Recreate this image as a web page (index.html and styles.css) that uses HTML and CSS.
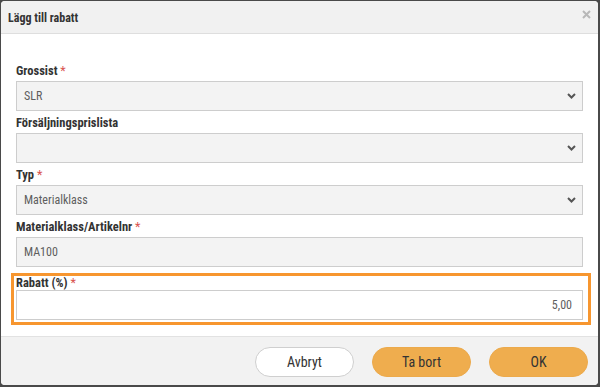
FILE: index.html
```html
<!DOCTYPE html>
<html lang="sv">
<head>
  <meta charset="UTF-8" />
  <title>Lägg till rabatt</title>
  <link rel="stylesheet" href="styles.css">
</head>
<body>
  <div class="modal">
    <div class="modal-header">
      <span class="modal-title">Lägg till rabatt</span>
      <svg class="close" width="9" height="9" viewBox="0 0 9 9">
        <path d="M1 1 L8 8 M8 1 L1 8" stroke="#b8b8b8" stroke-width="2" />
      </svg>
    </div>

    <div class="modal-body">
      <div class="form-group">
        <label>Grossist <span class="req">*</span></label>
        <div class="field select">
          <span>SLR</span>
          <svg width="9" height="6" viewBox="0 0 9 6"><path d="M1 1 L4.5 4.5 L8 1" fill="none" stroke="#555" stroke-width="2" /></svg>
        </div>
      </div>

      <div class="form-group">
        <label>Försäljningsprislista</label>
        <div class="field select">
          <span></span>
          <svg width="9" height="6" viewBox="0 0 9 6"><path d="M1 1 L4.5 4.5 L8 1" fill="none" stroke="#555" stroke-width="2" /></svg>
        </div>
      </div>

      <div class="form-group">
        <label>Typ <span class="req">*</span></label>
        <div class="field select">
          <span>Materialklass</span>
          <svg width="9" height="6" viewBox="0 0 9 6"><path d="M1 1 L4.5 4.5 L8 1" fill="none" stroke="#555" stroke-width="2" /></svg>
        </div>
      </div>

      <div class="form-group">
        <label>Materialklass/Artikelnr <span class="req">*</span></label>
        <div class="field">
          <span>MA100</span>
        </div>
      </div>

      <!-- markerad rad -->
      <div class="form-group highlight">
        <label>Rabatt (%) <span class="req">*</span></label>
        <div class="field input">
          <span>5,00</span>
        </div>
      </div>
    </div>

    <div class="modal-footer">
      <button class="btn btn-default">Avbryt</button>
      <button class="btn btn-warning">Ta bort</button>
      <button class="btn btn-warning">OK</button>
    </div>
  </div>
</body>
</html>
```

FILE: styles.css
```css
body {
  margin: 0;
  background-color: #4a4a4a;
  font-family: 'Roboto Condensed', 'Liberation Sans Narrow', 'Roboto', sans-serif;
  color: #333;
}

.modal {
  margin: 1px 2px 0 1px;
  height: 384px;
  background-color: #fff;
  border-radius: 4px;
  overflow: hidden;
  display: flex;
  flex-direction: column;
}

.modal-header {
  height: 32px;
  background-color: #f1f1f1;
  border-bottom: 1px solid #dedede;
  padding: 0 7px 0 7px;
  display: flex;
  justify-content: space-between;
  align-items: center;
}

.modal-title {
  font-size: 12px;
  font-weight: 700;
  margin-top: 2px;
}

.close {
  margin-top: -5px;
}

.modal-body {
  padding: 29px 15px 10px;
  flex-grow: 1;
}

.form-group {
  margin-bottom: 4px;
}

label {
  display: block;
  font-size: 12.5px;
  font-weight: 700;
  line-height: 16px;
  margin-bottom: 2px;
}

.req {
  color: #d9534f;
  font-weight: 400;
}

.field {
  height: 30px;
  box-sizing: border-box;
  border: 1px solid #cdcdcd;
  background-color: #f3f3f3;
  padding: 0 7px;
  display: flex;
  align-items: center;
  justify-content: space-between;
  font-size: 12px;
  color: #5e5e5e;
}

.select svg {
  margin-right: -1px;
}

.highlight {
  margin: 6px -8px 0 -5px;
  padding: 0 5px 2px 2px;
  border: 3px solid #f7962f;
}

.highlight label {
  line-height: 14px;
  margin-bottom: 0;
}

.input {
  background-color: #fff;
  justify-content: flex-end;
  padding-right: 10px;
}

.modal-footer {
  height: 49px;
  background-color: #f2f2f2;
  border-top: 1px solid #e2e2e2;
  display: flex;
  justify-content: flex-end;
  align-items: flex-start;
  gap: 18px;
  padding: 10px 10px 0;
  box-sizing: border-box;
}

.btn {
  width: 99px;
  height: 30px;
  border-radius: 15px;
  font-family: 'Roboto Condensed', 'Liberation Sans Narrow', 'Roboto', sans-serif;
  font-size: 14px;
  color: #333;
  cursor: pointer;
}

.btn-default {
  background-color: #fff;
  border: 1px solid #cfcfcf;
}

.btn-warning {
  background-color: #efad4e;
  border: 1px solid #ecaa4c;
}
```
